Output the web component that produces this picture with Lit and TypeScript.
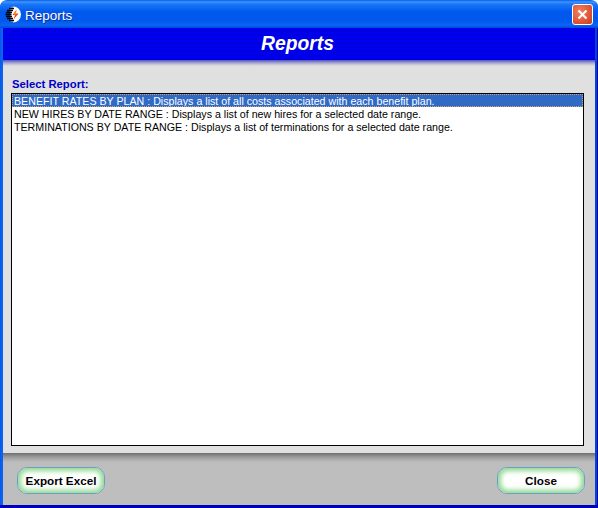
import { LitElement, html, css, svg } from "lit";
import { customElement } from "lit/decorators.js";

const rows = [
  "BENEFIT RATES BY PLAN : Displays a list of all costs associated with each benefit plan.",
  "NEW HIRES BY DATE RANGE : Displays a list of new hires for a selected date range.",
  "TERMINATIONS BY DATE RANGE : Displays a list of terminations for a selected date range.",
];

@customElement("app-root")
export class AppRoot extends LitElement {
  static styles = css`
    :host { display: block; width: 598px; height: 508px; background: #fff; }
    .win {
      width: 598px; height: 508px; box-sizing: border-box; display: flex; flex-direction: column;
      background:
        linear-gradient(0deg, #0000b8 0 3px, transparent 3px),
        linear-gradient(270deg, #0000a8 0 1px, #0044d4 1px 3px, transparent 3px),
        linear-gradient(90deg, #0a5ae8 0 1px, #0a62f4 1px 3px, transparent 3px);
      border-radius: 7px 7px 0 0; overflow: hidden;
      font-family: "Liberation Sans", Arial, sans-serif;
    }
    .title {
      height: 28px; flex: none; display: flex; align-items: center; box-sizing: border-box; padding: 0 5px 0 5px;
      background: linear-gradient(180deg, #0a5ce8 0, #3d95ff 2px, #1a78f8 4px, #0058ee 12px, #0059ec 21px, #0a66f6 25px, #0048d8 28px);
      color: #fff; font-size: 13.5px; gap: 2px; text-shadow: 1px 1px 0 #0f2f9c;
    }
    .title span { flex: 1; padding: 2px 0 0 1px; }
    .close {
      width: 21px; height: 21px; box-sizing: border-box; border: 1px solid #fff; border-radius: 3px;
      background: radial-gradient(circle at 35% 35%, #f0805f 0%, #e2583a 55%, #c33a1c 100%);
      display: flex; align-items: center; justify-content: center;
    }
    .body {
      flex: 1; min-height: 0; display: flex; flex-direction: column; margin: 0 3px 3px 3px; background: #e0e0e0;
    }
    .banner {
      height: 32px; flex: none; display: flex; align-items: center; justify-content: center; box-sizing: border-box;
      padding-right: 3px;
      background: repeating-linear-gradient(180deg, #0000f0 0 2px, #0000e0 2px 4px);
      color: #fff; font-size: 19.3px; font-weight: bold; font-style: italic;
    }
    .shade { height: 6px; flex: none; background: linear-gradient(180deg, #4f4fc0, #a8a8d4 50%, #e0e0e0); }
    .content { flex: 1; min-height: 0; display: flex; flex-direction: column; padding: 12px 11px 7px 8px; }
    .label { color: #0000c8; font-size: 11.3px; font-weight: bold; height: 15px; line-height: 13px; flex: none; padding-left: 1px; }
    .list {
      flex: 1; min-height: 0; background: #fff; border: 1px solid #000; box-sizing: border-box;
      font-size: 10.67px; color: #000;
    }
    .row { height: 13px; line-height: 15px; padding-left: 2px; white-space: nowrap; box-sizing: border-box; overflow: hidden; }
    .row.sel { background: #316ac5; color: #fff; border: 1px dotted #c8a878; line-height: 13px; padding-left: 1px; }
    .footer {
      height: 52px; flex: none; box-sizing: border-box; display: flex; align-items: center; justify-content: space-between;
      padding: 3px 10px 0 14px;
      background: linear-gradient(180deg, #6e6e6e 0, #9a9a9a 4px, #bdbdbd 9px, #bebebe 100%);
    }
    .btn {
      width: 88px; height: 27px; box-sizing: border-box; border: 1px solid #6a9fc8; border-radius: 10px;
      background: #fff; font: bold 11.7px "Liberation Sans", Arial, sans-serif; color: #000; padding: 0;
      box-shadow: inset 0 0 5px 3px #8fd88f; display: flex; align-items: center; justify-content: center;
    }
  `;

  render() {
    return html`
      <div class="win">
        <div class="title">
          <svg width="17" height="17" viewBox="0 0 17 17">
            <path d="M8 .5A8 8 0 0 1 8 16.5Z" fill="#fff"/>
            <path d="M5.5 1.5h4v14h-4z" fill="#fff"/>
            <path d="M4 2.5h5M2 4.5h6M1 6.5h6M.5 8.5h6M1 10.5h6M2 12.5h6M4 14.5h5" stroke="#000" stroke-width="1.4"/>
            <path d="M11.5 3.5 7.5 9H10l-1.5 4.5L13.5 7.5H11z" fill="#e8421c"/>
            <path d="M10.8 5 8.8 8.5h1.8" fill="#f6c21c"/>
          </svg>
          <span>Reports</span>
          <div class="close">
            <svg width="13" height="13" viewBox="0 0 13 13">${svg`<path d="M2.5 2.5l8 8M10.5 2.5l-8 8" stroke="#fff" stroke-width="2.2"/>`}</svg>
          </div>
        </div>
        <div class="body">
          <div class="banner">Reports</div>
          <div class="shade"></div>
          <div class="content">
            <div class="label">Select Report:</div>
            <div class="list">
              ${rows.map((r, i) => html`<div class="row ${i === 0 ? "sel" : ""}">${r}</div>`)}
            </div>
          </div>
          <div class="footer">
            <button class="btn">Export Excel</button>
            <button class="btn">Close</button>
          </div>
        </div>
      </div>
    `;
  }
}
